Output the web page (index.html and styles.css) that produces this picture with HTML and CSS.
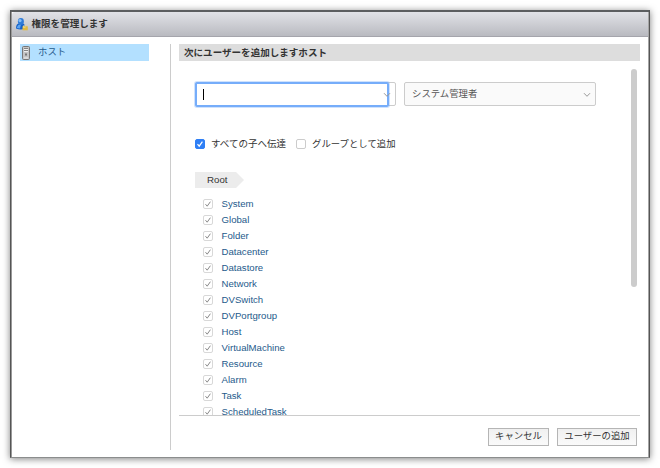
FILE: index.html
```html
<!DOCTYPE html>
<html lang="ja">
<head>
<meta charset="utf-8">
<title>権限を管理します</title>
<link rel="stylesheet" href="styles.css">
</head>
<body>
<div class="dialog">
  <header class="titlebar">
    <svg class="user-icon" width="12" height="13" viewBox="0 0 12 13">
      <path d="M0 10.5 Q0 6 2.5 5.5 L7 5.5 Q9.4 6 9.2 10.5 Q5 12.5 0 10.5Z" fill="#1762c8"/>
      <path d="M1 9 Q2 6 5 6.3 L4 10.6 L1 10Z" fill="#5ba4f2"/>
      <ellipse cx="4.9" cy="3.4" rx="3" ry="3.4" fill="#2f7bd8"/>
      <circle cx="4" cy="2.6" r="1.6" fill="#83bdf7"/>
      <path d="M7.5 9V7.8Q9 6 10.5 7.8V9" fill="none" stroke="#d5ceb5" stroke-width="1"/>
      <rect x="6.5" y="8.3" width="5.3" height="4" fill="#e2ba42"/>
      <path d="M7 9h2.5" stroke="#fbe99f"/>
    </svg>
    <h1>権限を管理します</h1>
  </header>
  <div class="body">
    <nav class="sidebar">
      <a class="side-item">
        <svg width="8" height="14" viewBox="0 0 8 14">
          <rect x=".5" y=".5" width="7" height="13" rx="1" fill="#c4c4c4" stroke="#777"/>
          <path d="M2 2.5h4M2 4.5h4" stroke="#858585"/>
          <path d="M2 3.5h4M2 5.5h4M2 12h4" stroke="#eee"/>
          <rect x="3" y="7.5" width="2" height="2" fill="#777"/>
        </svg>
        <span>ホスト</span>
      </a>
    </nav>
    <main class="content">
      <h2>次にユーザーを追加しますホスト</h2>
      <div class="scroll-area">
        <div class="form">
          <div class="fields">
            <div class="combo">
              <svg class="chevron" width="8" height="6" viewBox="0 0 8 6"><path d="M1 1.2 4 4.3 7 1.2"/></svg>
              <div class="focused-input"><span class="caret"></span></div>
            </div>
            <div class="select"><span>システム管理者</span>
              <svg class="chevron" width="8" height="6" viewBox="0 0 8 6"><path d="M1 1.2 4 4.3 7 1.2"/></svg>
            </div>
          </div>
          <div class="options">
            <span class="check on"><svg width="10" height="10" viewBox="0 0 10 10"><path d="M2.5 5.2 4.2 7.2 7.4 2.7"/></svg></span>
            <span class="option-label first">すべての子へ伝達</span>
            <span class="check"></span>
            <span class="option-label">グループとして追加</span>
          </div>
          <div class="crumb">Root</div>
          <ul class="tree" id="tree"></ul>
        </div>
        <div class="scrollbar"></div>
      </div>
      <footer>
        <button class="cancel">キャンセル</button>
        <button class="add">ユーザーの追加</button>
      </footer>
    </main>
  </div>
</div>
<script src="script.js"></script>
</body>
</html>
```
FILE: styles.css
```css
* { box-sizing: border-box; }
body {
  margin: 0;
  padding: 10px;
  width: 660px;
  height: 468px;
  overflow: hidden;
  background: #fff;
  font: 9.4px/14px "Liberation Sans", "Noto Sans CJK JP", sans-serif;
  color: #333;
}
.dialog {
  width: 640px;
  height: 448px;
  display: flex;
  flex-direction: column;
  background: #fff;
  border: 1px solid #555;
  border-top: 2px solid #5c5e60;
  border-bottom: 1px solid #8b8d8d;
  box-shadow: inset 1px 0 #999, inset -1px 0 #a5a5a5, 0 1px 7px rgba(0,0,0,.5);
}
.titlebar {
  height: 25px;
  margin: 0 1px;
  padding-left: 4px;
  display: flex;
  align-items: center;
  gap: 3.5px;
  border-bottom: 1px solid #a5a5ac;
  border-radius: 3px 0 0 0;
  background: linear-gradient(#e1e2e7, #b9bac0);
}
h1, h2 { margin: 0; font-size: 9.55px; font-weight: 700; }
h1 { color: #333; }
.body {
  flex: 1;
  min-height: 0;
  display: flex;
  padding: 7px 9px 7px 8px;
}
.sidebar { width: 152px; border-right: 1px solid #ccc; }
.side-item {
  width: 129px;
  height: 17px;
  margin-left: 1px;
  padding-left: 2px;
  display: flex;
  align-items: center;
  gap: 8px;
  background: #b3e0ff;
  color: #255a8b;
}
.side-item span { margin-top: -2px; }
.content { flex: 1; min-width: 0; padding-left: 8px; display: flex; flex-direction: column; }
h2 { height: 17px; padding-left: 5px; line-height: 17px; background: #ddd; }
.scroll-area {
  height: 355px;
  overflow: hidden;
  display: flex;
  justify-content: space-between;
  border-bottom: 1px solid #ccc;
}
.form { padding: 21px 0 0 16px; }
.fields { display: flex; gap: 8px; }
.combo, .select {
  height: 24px;
  border: 1px solid #ccc;
  border-radius: 2px;
  position: relative;
}
.combo { width: 201px; background: #fff; }
.select {
  width: 192px;
  padding: 0 4px 0 7px;
  display: flex;
  align-items: center;
  justify-content: space-between;
  background: #fafafa;
  color: #555;
}
.select span { margin-top: -1px; }
.select .chevron { margin-top: 1px; }
.chevron path { fill: none; stroke: #999; stroke-width: 1; }
.combo .chevron { position: absolute; right: 4px; top: 9px; z-index: 1; }
.focused-input {
  position: absolute;
  left: -1px;
  top: -1px;
  width: 194px;
  height: 25px;
  border: 2px solid #76adfa;
  border-radius: 2px;
  box-shadow: 0 0 0 1px rgba(118,173,250,.35);
}
.caret { display: block; width: 1px; height: 11px; margin: 5px 0 0 6px; background: #000; }
.options { margin-top: 30px; height: 16px; display: flex; align-items: center; }
.check {
  flex: none;
  width: 10px;
  height: 10px;
  border: 1px solid #ccc;
  border-radius: 2px;
  background: #fff;
}
.check svg { display: block; margin: -1px; }
.check path { fill: none; stroke: #888; stroke-width: 1; }
.check.on { background: #2f7ff5; border-color: #2f7ff5; }
.check.on path { stroke: #fff; stroke-width: 1.2; }
.option-label { margin-left: 6px; }
.option-label.first { width: 85px; font-size: 9.5px; }
.crumb {
  width: 49px;
  height: 16px;
  margin-top: 20px;
  padding-left: 12px;
  line-height: 16px;
  background: #ececec;
  clip-path: polygon(0 0, 41px 0, 100% 50%, 41px 100%, 0 100%);
  font-size: 9.7px;
}
.tree { list-style: none; margin: 8px 0 0; padding: 0 0 0 8px; font-size: 9.6px; }
.tree li { height: 16px; display: flex; align-items: center; gap: 8.6px; color: #255a8b; }
.tree .check { border-color: #d8d8d8; }
.scrollbar { width: 6px; height: 218px; margin: 8px 3px 0 0; border-radius: 3px; background: #ccc; }
footer { display: flex; justify-content: flex-end; gap: 8px; padding: 12px 3px 0 0; }
button {
  height: 18px;
  padding: 0 0 2px;
  border: 1px solid #b5b5b5;
  background: linear-gradient(#f0f0f0, #fafafa);
  font: inherit;
  color: #333;
}
.cancel { width: 61px; }
.add { width: 80px; }
```
FILE: script.js
```js
const names = ["System", "Global", "Folder", "Datacenter", "Datastore", "Network", "DVSwitch",
  "DVPortgroup", "Host", "VirtualMachine", "Resource", "Alarm", "Task", "ScheduledTask"];
document.getElementById("tree").innerHTML = names.map(name =>
  `<li><span class="check"><svg width="10" height="10" viewBox="0 0 10 10"><path d="M2.5 5.2 4.2 7.2 7.4 2.7"/></svg></span>${name}</li>`
).join("");
```
